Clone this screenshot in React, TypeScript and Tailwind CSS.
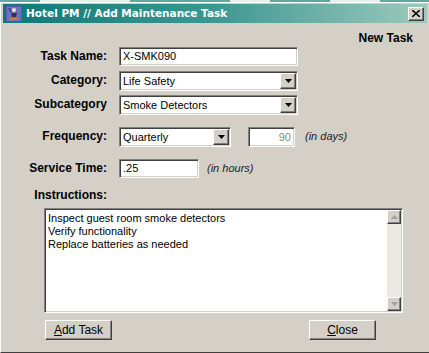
import React from 'react'

const sunken =
  'border border-t-[#808080] border-l-[#808080] border-b-white border-r-white shadow-[inset_1px_1px_0_#404040,inset_-1px_-1px_0_#d4d0c8]'
const raised =
  'border border-t-white border-l-white border-b-[#404040] border-r-[#404040] shadow-[inset_-1px_-1px_0_#808080,inset_1px_1px_0_#d4d0c8]'

function Arrow({ up = false }: { up?: boolean }) {
  return (
    <svg width="7" height="4" viewBox="0 0 7 4">
      {up ? <path d="M3.5 0 L7 4 L0 4 Z" fill="#a0a0a0" /> : <path d="M0 0 L7 0 L3.5 4 Z" fill="#000" />}
    </svg>
  )
}

function Select({ value, width }: { value: string; width: string }) {
  return (
    <div className={`${sunken} ${width} h-[20px] bg-white flex items-center`}>
      <span className="flex-1 pl-[3px] text-[11px] text-black leading-none">{value}</span>
      <div className={`${raised} w-[16px] h-[16px] bg-[#d4d0c8] flex items-center justify-center mr-[1px]`}>
        <Arrow />
      </div>
    </div>
  )
}

function Label({ children, className = '' }: { children: React.ReactNode; className?: string }) {
  return (
    <div className={`w-[105px] shrink-0 text-right font-bold text-[12px] text-black leading-none pt-[3px] ${className}`}>
      {children}
    </div>
  )
}

function AppIcon() {
  return (
    <svg width="16" height="16" viewBox="0 0 16 16">
      <rect x="0" y="0" width="16" height="16" fill="#5a5aa8" />
      <rect x="1" y="1" width="14" height="14" fill="#7070c0" />
      <circle cx="8" cy="4" r="2" fill="#e8e0d0" />
      <path d="M5 7 L11 7 L10 11 L6 11 Z" fill="#303060" />
      <path d="M4 12 L12 12 L12 14 L4 14 Z" fill="#d08020" />
      <path d="M3 2 L5 6" stroke="#202040" strokeWidth="1" />
    </svg>
  )
}

export default function App() {
  return (
    <div
      className="w-[429px] h-[353px] overflow-hidden bg-[#d4d0c8] flex flex-col"
      style={{ fontFamily: '"Liberation Sans", Arial, sans-serif' }}
    >
      {/* strip of window behind */}
      <div className="h-[2px] flex shrink-0 bg-[#5fa8a0]">
        <div className="w-[40px]" />
        <div className="w-[90px] bg-[#e8f0ee]" />
        <div className="w-[100px]" />
        <div className="w-[40px] bg-[#e8f0ee]" />
        <div className="w-[60px]" />
        <div className="w-[50px] bg-[#e8f0ee]" />
      </div>

      {/* window */}
      <div className="flex-1 flex flex-col border-l border-t border-l-white border-t-white border-b border-b-[#404040] px-[1px] pt-[1px]">
        {/* title bar */}
        <div className="h-[19px] mx-[1px] shrink-0 flex items-center bg-gradient-to-r from-[#0a7878] via-[#3a9894] to-[#9ccabc] pl-[3px] pr-[3px]">
          <AppIcon />
          <span
            className="ml-[4px] text-white font-bold text-[10.5px] leading-none"
            style={{ fontFamily: '"DejaVu Sans", Verdana, sans-serif' }}
          >
            Hotel PM // Add Maintenance Task
          </span>
          <div className="flex-1" />
          <div className={`${raised} w-[16px] h-[14px] bg-[#d4d0c8] flex items-center justify-center`}>
            <svg width="8" height="7" viewBox="0 0 8 7">
              <path d="M0 0 L8 7 M8 0 L0 7" stroke="#000" strokeWidth="1.6" />
            </svg>
          </div>
        </div>

        {/* body */}
        <div className="flex-1 flex flex-col text-black">
          <div className="flex justify-end pr-[15px] pt-[9px]">
            <span className="font-bold text-[12px] leading-none">New Task</span>
          </div>

          <div className="flex mt-[3px] items-start">
            <Label>Task Name:</Label>
            <div className={`${sunken} ml-[12px] w-[179px] h-[19px] bg-white flex items-center pl-[3px] text-[11px] leading-none`}>
              X-SMK090
            </div>
          </div>

          <div className="flex mt-[5px] items-start">
            <Label>Category:</Label>
            <div className="ml-[12px]">
              <Select value="Life Safety" width="w-[179px]" />
            </div>
          </div>

          <div className="flex mt-[4px] items-start">
            <Label className="pt-[2px]">Subcategory</Label>
            <div className="ml-[12px]">
              <Select value="Smoke Detectors" width="w-[179px]" />
            </div>
          </div>

          <div className="flex mt-[12px] items-start">
            <Label>Frequency:</Label>
            <div className="ml-[12px]">
              <Select value="Quarterly" width="w-[112px]" />
            </div>
            <div className={`${sunken} ml-[17px] w-[47px] h-[20px] bg-white flex items-center justify-end pr-[3px] text-[11px] leading-none text-[#8a8a80]`}>
              90
            </div>
            <span className="ml-[10px] pt-[4px] italic text-[11px] leading-none text-[#202020]">(in days)</span>
          </div>

          <div className="flex mt-[12px] items-start">
            <Label>Service Time:</Label>
            <div className={`${sunken} ml-[12px] w-[80px] shrink-0 h-[19px] bg-white flex items-center pl-[3px] text-[11px] leading-none`}>
              .25
            </div>
            <span className="ml-[8px] pt-[4px] italic text-[11px] leading-none text-[#202020]">(in hours)</span>
          </div>

          <div className="flex mt-[8px]">
            <Label>Instructions:</Label>
          </div>

          <div className={`${sunken} ml-[42px] mt-[7px] w-[359px] h-[105px] bg-white flex`}>
            <div className="flex-1 pl-[3px] pt-[3px] text-[11px] leading-[13px]">
              <div>Inspect guest room smoke detectors</div>
              <div>Verify functionality</div>
              <div>Replace batteries as needed</div>
            </div>
            <div className="w-[14px] my-[1px] mr-[1px] bg-[#ece9e2] flex flex-col justify-between">
              <div className={`${raised} h-[14px] bg-[#d4d0c8] flex items-center justify-center`}>
                <Arrow up />
              </div>
              <div className={`${raised} h-[14px] bg-[#d4d0c8] flex items-center justify-center`}>
                <svg width="7" height="4" viewBox="0 0 7 4">
                  <path d="M0 0 L7 0 L3.5 4 Z" fill="#a0a0a0" />
                </svg>
              </div>
            </div>
          </div>

          <div className="flex mt-[7px] ml-[43px] pr-[52px]">
            <button className={`${raised} w-[67px] h-[20px] bg-[#d4d0c8] text-[12px] leading-none`}>
              <span className="underline">A</span>dd Task
            </button>
            <div className="flex-1" />
            <button className={`${raised} w-[67px] h-[20px] bg-[#d4d0c8] text-[12px] leading-none`}>
              <span className="underline">C</span>lose
            </button>
          </div>
        </div>
      </div>
    </div>
  )
}
